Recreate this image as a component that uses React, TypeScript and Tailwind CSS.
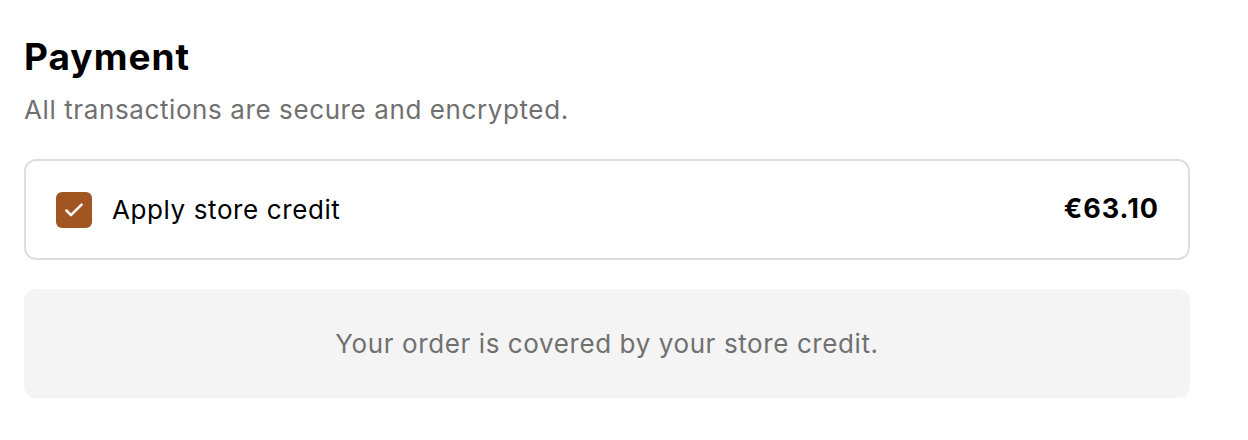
export default function App() {
  return (
    <div className="min-h-screen bg-white px-6 pt-[35px] font-['Inter',sans-serif]">
      <h2 className="text-[37px] font-bold leading-[44px] tracking-[1px] text-black">Payment</h2>
      <p className="mt-[15px] text-[26px] leading-[32px] tracking-[0.6px] text-[#707070]">
        All transactions are secure and encrypted.
      </p>
      <div className="mt-[33px] w-[1166px] flex items-center justify-between h-[101px] rounded-[12px] border-2 border-[#dedede] pl-[30px] pr-[29px]">
        <label className="flex items-center gap-[20px]">
          <span className="flex h-[36px] w-[36px] items-center justify-center rounded-[6px] bg-[#a15520]">
            <svg width="26" height="26" viewBox="0 0 24 24" fill="none" stroke="white" strokeWidth={2.4} strokeLinecap="round" strokeLinejoin="round">
              <path d="M5 12.5l4.2 4.2L19 7" />
            </svg>
          </span>
          <span className="text-[26px] tracking-[0.6px] text-black">Apply store credit</span>
        </label>
        <span className="text-[27px] font-bold tracking-[1px] text-black">€63.10</span>
      </div>
      <div className="mt-[29px] w-[1166px] h-[109px] rounded-[12px] bg-[#f4f4f4] flex items-center justify-center">
        <p className="text-[26px] tracking-[0.6px] text-[#707070]">Your order is covered by your store credit.</p>
      </div>
    </div>
  );
}
